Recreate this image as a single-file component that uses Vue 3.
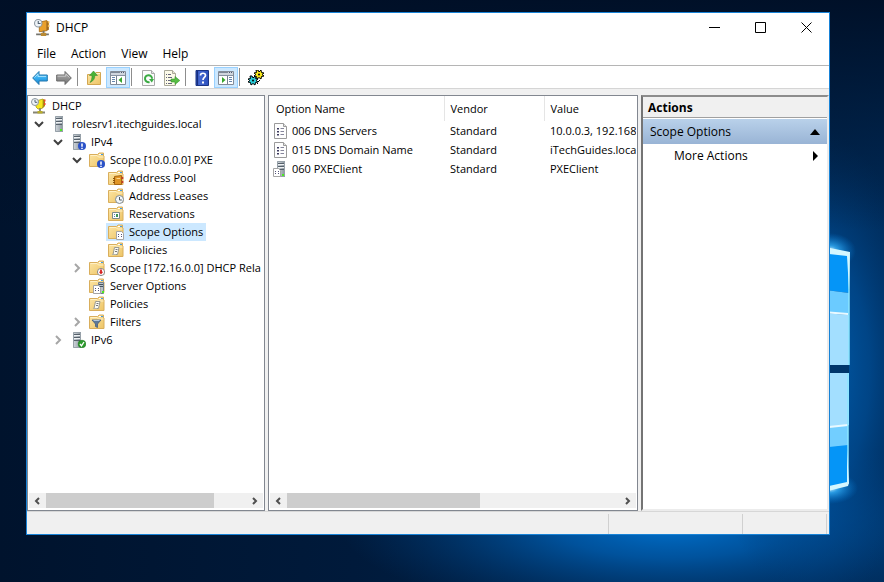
<script setup>
const menus = ['File', 'Action', 'View', 'Help']

const tools = [
  { id: 'back', label: 'Back' },
  { id: 'forward', label: 'Forward' },
  { sep: true },
  { id: 'up', label: 'Up one level' },
  { id: 'tree-pane', label: 'Show/Hide Console Tree', active: true },
  { sep: true },
  { id: 'refresh', label: 'Refresh' },
  { id: 'export', label: 'Export List' },
  { sep: true },
  { id: 'help', label: 'Help' },
  { id: 'action-pane', label: 'Show/Hide Action Pane', active: true },
  { sep: true },
  { id: 'gears', label: 'Configure options' },
]

const tree = [
  { text: 'DHCP', icon: 'dhcp', level: 0 },
  { text: 'rolesrv1.itechguides.local', icon: 'server', level: 1, state: 'open' },
  { text: 'IPv4', icon: 'ipv4', level: 2, state: 'open' },
  { text: 'Scope [10.0.0.0] PXE', icon: 'scope-alert', level: 3, state: 'open' },
  { text: 'Address Pool', icon: 'pool', level: 4 },
  { text: 'Address Leases', icon: 'leases', level: 4 },
  { text: 'Reservations', icon: 'reservations', level: 4 },
  { text: 'Scope Options', icon: 'scope-options', level: 4, selected: true },
  { text: 'Policies', icon: 'policies', level: 4 },
  { text: 'Scope [172.16.0.0] DHCP Rela', icon: 'scope-down', level: 3, state: 'closed' },
  { text: 'Server Options', icon: 'server-options', level: 3 },
  { text: 'Policies', icon: 'policies', level: 3 },
  { text: 'Filters', icon: 'filters', level: 3, state: 'closed' },
  { text: 'IPv6', icon: 'ipv6', level: 2, state: 'closed' },
]

const options = [
  { name: '006 DNS Servers', vendor: 'Standard', value: '10.0.0.3, 192.168', icon: 'option' },
  { name: '015 DNS Domain Name', vendor: 'Standard', value: 'iTechGuides.loca', icon: 'option' },
  { name: '060 PXEClient', vendor: 'Standard', value: 'PXEClient', icon: 'server-option' },
]

const indent = (level) => (level ? 3 + 19 * (level - 1) : 1) + 'px'
</script>

<template>
  <div class="desktop">
    <svg class="wallpaper" viewBox="0 0 884 582" preserveAspectRatio="none" aria-hidden="true">
      <defs>
        <linearGradient id="wp-base" x1="0" y1="0" x2="1" y2="0">
          <stop offset="0" stop-color="#00132d" /><stop offset=".4" stop-color="#001a3b" />
          <stop offset=".75" stop-color="#00264f" /><stop offset="1" stop-color="#002b59" />
        </linearGradient>
        <radialGradient id="wp-glow" cx=".5" cy=".5" r=".5">
          <stop offset="0" stop-color="#0070cc" /><stop offset=".35" stop-color="#005aaa" stop-opacity=".85" />
          <stop offset="1" stop-color="#003b78" stop-opacity="0" />
        </radialGradient>
        <radialGradient id="wp-side" cx=".5" cy=".5" r=".5">
          <stop offset="0" stop-color="#0062b4" /><stop offset=".5" stop-color="#00509a" stop-opacity=".7" />
          <stop offset="1" stop-color="#003b78" stop-opacity="0" />
        </radialGradient>
        <linearGradient id="wp-top" x1="0" y1="0" x2="0" y2="1">
          <stop offset="0" stop-color="#000f26" stop-opacity=".95" /><stop offset="1" stop-color="#000f26" stop-opacity="0" />
        </linearGradient>
        <radialGradient id="wp-flare" cx=".5" cy=".5" r=".5">
          <stop offset="0" stop-color="#e6fbff" /><stop offset=".3" stop-color="#38b6ff" stop-opacity=".75" />
          <stop offset="1" stop-color="#0080e0" stop-opacity="0" />
        </radialGradient>
      </defs>
      <rect width="884" height="582" fill="url(#wp-base)" />
      <ellipse cx="670" cy="525" rx="330" ry="95" fill="url(#wp-glow)" />
      <ellipse cx="815" cy="370" rx="110" ry="240" fill="url(#wp-side)" />
      <rect width="884" height="230" fill="url(#wp-top)" />
      <ellipse cx="830" cy="251" rx="26" ry="18" fill="url(#wp-flare)" />
      <ellipse cx="830" cy="488" rx="28" ry="16" fill="url(#wp-flare)" />
      <path d="M810 247 849 254V293L810 288Z" fill="#0595f7" />
      <path d="M810 288 849 293V315L810 312Z" fill="#6bcbff" />
      <path d="M810 312 849 315V365H810Z" fill="#a3dfff" />
      <path d="M810 311 848 314" stroke="#e9f9ff" stroke-width="2" />
      <path d="M810 373H849V425L810 429Z" fill="#a3dfff" />
      <path d="M810 429 848 425V446L810 449Z" fill="#72ceff" />
      <path d="M810 449 848 445V485L810 490Z" fill="#0595f7" />
      <path d="M810 429 848 425" stroke="#e9f9ff" stroke-width="2" />
      <path d="M810 365H849V373H810Z" fill="#00366b" />
      <path d="M849 254V365" stroke="#8be6ff" stroke-width="1.5" />
      <path d="M848 373V484" stroke="#8be6ff" stroke-width="1.5" />
      <path d="M820 246 850 252 849 290 847 256 820 253Z" fill="#d4f7ff" />
      <path d="M820 488 847 482 847 450 849 483 848 486 820 493Z" fill="#d4f7ff" />
    </svg>

    <svg class="sprite" width="0" height="0" aria-hidden="true">
      <defs>
        <linearGradient id="g-blue" x1="0" y1="0" x2="0" y2="1">
          <stop offset="0" stop-color="#7fd4fb" /><stop offset=".5" stop-color="#36aef0" /><stop offset="1" stop-color="#1580cd" />
        </linearGradient>
        <linearGradient id="g-gray" x1="0" y1="0" x2="0" y2="1">
          <stop offset="0" stop-color="#b5b5b5" /><stop offset="1" stop-color="#707070" />
        </linearGradient>
        <linearGradient id="g-folder" x1="0" y1="0" x2="1" y2="1">
          <stop offset="0" stop-color="#fde6a5" /><stop offset="1" stop-color="#edc466" />
        </linearGradient>
        <linearGradient id="g-help" x1="0" y1="0" x2="1" y2="0">
          <stop offset="0" stop-color="#1f3d9c" /><stop offset=".25" stop-color="#4668d0" /><stop offset="1" stop-color="#2c50bd" />
        </linearGradient>
        <linearGradient id="g-server" x1="0" y1="0" x2="1" y2="0">
          <stop offset="0" stop-color="#d3d9de" /><stop offset=".5" stop-color="#b0b8bf" /><stop offset="1" stop-color="#858f98" />
        </linearGradient>

        <g id="folder-shape">
          <path d="M.5 2.5h8l1.500-1.500h4.500v3h.5v10.500H.5Z" fill="url(#g-folder)" stroke="#d9ae5c" />
          <path d="M10 2.500h4" stroke="#fff" /><path d="M12 2.500h2" stroke="#3f9be6" />
          <path d="M1.500 3.500h6.500l1.500 1.500h5" fill="none" stroke="#fff1c6" />
        </g>
        <g id="tower-shape">
          <path d="M0 0H8V16H0Z" fill="url(#g-server)" /><path d="M.5.5H7.500V15.500H.5Z" fill="none" stroke="#97a1a9" />
          <path d="M1 2.500H7M1 5.500H7M1 8.500H7" stroke="#56616b" />
          <path d="M1 3.500H7M1 6.500H7" stroke="#eef1f3" />
        </g>
        <g id="sheet-shape">
          <path d="M.5.5H5.500L7.500 2.500V8.500H.5Z" fill="#fff" stroke="#a5a5a5" />
          <path d="M2 3.500h1M5 3.500h1M2 5.500h1M5 5.500h1" stroke="#54547a" />
        </g>
        <g id="alert-shape">
          <circle cx="4" cy="4" r="4" fill="#2a52c8" /><path d="M4 1.500V4.800M4 5.800V7" stroke="#fff" stroke-width="1.500" />
        </g>
        <g id="gear-shape">
          <path d="M4 0 5 2 7 0 7.500 2.500 10 3 8 4.500 10 6 7.500 6.500 7 9 5 7.500 3 9 2.500 6.500 0 6 1.800 4.500 0 3 2.500 2.500 2 0Z" stroke="#000" stroke-width="1" />
          <circle cx="5" cy="4.500" r="1" fill="#000" />
        </g>

        <symbol id="i-dhcp-app" viewBox="0 0 16 16">
          <path d="M5 3 12 1.500V11L5 12Z" fill="#e9a02c" stroke="#a96c14" stroke-width=".8" />
          <path d="M12 1.500 14 3V10L12 11Z" fill="#a56a18" />
          <path d="M13 2h1.500v2H13ZM13 5.500h1.500v2H13Z" fill="#f0b850" />
          <path d="M9 11v3M2 14.500h12" stroke="#76756e" stroke-width="1.800" /><path d="M6.500 13h5v3h-5Z" fill="#b98a33" />
          <circle cx="4" cy="4" r="3.500" fill="#eef3f7" stroke="#8b969f" /><path d="M4 1.800V4.300H6.200" fill="none" stroke="#4f6070" />
        </symbol>
        <symbol id="i-dhcp" viewBox="0 0 16 16">
          <path d="M5 3 12 1V9L10 11H7L5 9Z" fill="#f7e71f" stroke="#aa9d15" stroke-width=".8" />
          <path d="M12 1 14 2V8L11 11 12 8Z" fill="#aa8a15" />
          <path d="M13 1.500h1.500v2H13ZM13 5h1.500v2H13Z" fill="#ef4430" />
          <path d="M9 10v4M2 14.500h12" stroke="#858475" stroke-width="1.800" /><path d="M6.500 13h5v2.500h-5Z" fill="#b8ac2d" />
          <circle cx="4" cy="4" r="3.500" fill="#eef3f7" stroke="#8b969f" /><path d="M4 1.800V4.300H6.200" fill="none" stroke="#4f6070" />
        </symbol>
        <symbol id="i-server" viewBox="0 0 16 16">
          <use href="#tower-shape" x="4" y="0" /><path d="M9 13h2v2H9Z" fill="#4bea22" />
        </symbol>
        <symbol id="i-ipv4" viewBox="0 0 16 16">
          <use href="#tower-shape" x="3" y="0" /><use href="#alert-shape" x="8" y="8" />
        </symbol>
        <symbol id="i-ipv6" viewBox="0 0 16 16">
          <use href="#tower-shape" x="3" y="0" /><circle cx="12" cy="12" r="3.800" fill="#2c9b2c" stroke="#187318" stroke-width=".6" />
          <path d="M10 12 11.500 13.800 14 10" fill="none" stroke="#fff" stroke-width="1.300" />
        </symbol>
        <symbol id="i-scope-alert" viewBox="0 0 16 16">
          <use href="#folder-shape" /><use href="#alert-shape" x="8" y="8" />
        </symbol>
        <symbol id="i-scope-down" viewBox="0 0 16 16">
          <use href="#folder-shape" /><circle cx="12" cy="12" r="3.600" fill="#fff" stroke="#8c8c8c" />
          <path d="M12 9.500V13" stroke="#d61f1f" stroke-width="1.800" /><path d="M9.800 11.800h4.400L12 14.600Z" fill="#d61f1f" />
        </symbol>
        <symbol id="i-pool" viewBox="0 0 16 16">
          <use href="#folder-shape" /><path d="M6.500 6.500 13.500 5.500V14.500H6.500Z" fill="#e09526" stroke="#a8660f" />
          <path d="M5 8.500h2M5 10.500h2M5 12.500h2" stroke="#8c5208" /><path d="M14.500 7v2M14.500 11v2" stroke="#c9362a" stroke-width="1.500" />
          <path d="M8.500 8.500h3.500" stroke="#ffd890" />
        </symbol>
        <symbol id="i-leases" viewBox="0 0 16 16">
          <use href="#folder-shape" /><circle cx="11.500" cy="11.500" r="4" fill="#f3f7f9" stroke="#7f8a92" />
          <path d="M11.500 9V12H13.800" fill="none" stroke="#4c5963" />
        </symbol>
        <symbol id="i-reservations" viewBox="0 0 16 16">
          <use href="#folder-shape" /><path d="M4.500 6.500h7v6h-7Z" fill="#fff" stroke="#7d8b8b" />
          <path d="M6 8h1v1H6ZM6 10h1v1H6Z" fill="#5a81b3" /><path d="M8 8h2v3H8Z" fill="#3c9452" />
        </symbol>
        <symbol id="i-scope-options" viewBox="0 0 16 16">
          <use href="#folder-shape" /><use href="#sheet-shape" x="8" y="7" />
        </symbol>
        <symbol id="i-policies" viewBox="0 0 16 16">
          <use href="#folder-shape" /><path d="M6.500 5.500h4.500l-1.500 7H5Z" fill="#fbfbf4" stroke="#9a9a90" />
          <path d="M7.500 7.500h2M7 9.500h2" stroke="#777" /><path d="M4 12h4v1H4Z" fill="#b4b4a8" />
        </symbol>
        <symbol id="i-server-options" viewBox="0 0 16 16">
          <use href="#folder-shape" /><path d="M9.500 4.500h5v11h-5Z" fill="#b9c1c8" stroke="#74808a" />
          <path d="M10 6.500h4M10 8.500h4" stroke="#48545f" /><path d="M13 13h2v2h-2Z" fill="#4bea22" />
          <use href="#sheet-shape" x="4" y="7" />
        </symbol>
        <symbol id="i-filters" viewBox="0 0 16 16">
          <use href="#folder-shape" /><path d="M3 6h9L8.500 10v3.500l-2-1V10Z" fill="#5c7899" stroke="#455d7b" stroke-width=".8" />
          <path d="M4.500 6.500h6" stroke="#b3c8de" />
        </symbol>
        <symbol id="i-option" viewBox="0 0 16 16">
          <path d="M1.500.5H10.500L13.500 3.500V15.500H1.500Z" fill="#fdfdfd" stroke="#9a9a9a" /><path d="M10.500.5V3.500H13.500" fill="#e4e4e4" stroke="#9a9a9a" />
          <path d="M4 5h2v1.500H4ZM4 8h2v1.500H4ZM4 11h2v1.500H4Z" fill="#3d3b5e" /><path d="M7.500 5.500H11M7.500 8.500H11M7.500 11.500H11" stroke="#85859b" />
        </symbol>
        <symbol id="i-server-option" viewBox="0 0 16 16">
          <use href="#tower-shape" x="4" y="0" /><path d="M9 13h2v2H9Z" fill="#4bea22" /><use href="#sheet-shape" x="0" y="7" />
        </symbol>

        <symbol id="i-back" viewBox="0 0 16 16">
          <path d="M.7 8 7 1.500V5H15.300V11H7V14.500Z" fill="url(#g-blue)" stroke="#2377ad" stroke-linejoin="round" />
          <path d="M2.500 7.500 6 4V6.500H14" fill="none" stroke="#b4e8ff" stroke-width=".8" />
        </symbol>
        <symbol id="i-forward" viewBox="0 0 16 16">
          <path d="M15.300 8 9 1.500V5H.7V11H9V14.500Z" fill="url(#g-gray)" stroke="#686868" stroke-linejoin="round" />
          <path d="M1.500 6.200H9.800V4L13.500 7.500" fill="none" stroke="#d4d4d4" stroke-width=".8" />
        </symbol>
        <symbol id="i-up" viewBox="0 0 16 16">
          <path d="M1.500 4.500H8L10 2.500H14.500V14.500H1.500Z" fill="url(#g-folder)" stroke="#d3a650" /><path d="M10 3.500h4" stroke="#fff5d1" />
          <path d="M4 12.500C7.500 11 9 8.500 8.800 5.500H11.500L7.500 1 3.500 5.500H6C6 8.500 5.500 10.500 4 12.500Z" fill="#48b336" stroke="#2d8424" stroke-width=".5" />
        </symbol>
        <g id="pane-shape">
          <path d="M.5 1.500H15.500V14.500H.5Z" fill="#fff" stroke="#848c98" /><path d="M1 2h14v3H1Z" fill="#cfd5dd" />
          <path d="M1 2.500h9" stroke="#7c8796" /><path d="M11 2.500h1M13 2.500h1" stroke="#4b5870" /><path d="M1 5.500H15" stroke="#8792a2" />
        </g>
        <symbol id="i-tree-pane" viewBox="0 0 16 16">
          <use href="#pane-shape" /><path d="M6.500 6V14" stroke="#75808f" />
          <path d="M2 7.500h3M2 9.500h3M2 11.500h3" stroke="#6686ad" /><path d="M12 7V13L8.500 10Z" fill="#35a52c" />
        </symbol>
        <symbol id="i-action-pane" viewBox="0 0 16 16">
          <use href="#pane-shape" /><path d="M9.500 6V14" stroke="#75808f" />
          <path d="M11 7.500h3M11 9.500h3M11 11.500h3" stroke="#6686ad" /><path d="M4 7V13L7.500 10Z" fill="#35a52c" />
        </symbol>
        <symbol id="i-refresh" viewBox="0 0 16 16">
          <path d="M2.500.5H11.500L14.500 3.500V15.500H2.500Z" fill="#fbfbfb" stroke="#a9a9a9" /><path d="M11.500.5V3.500H14.500" fill="#e5e5e5" stroke="#a9a9a9" />
          <path d="M9.500 12A3.500 3.500 0 1 1 12 8.800" fill="none" stroke="#3aaa42" stroke-width="2" /><path d="M9 9H14L11.800 12.500Z" fill="#3aaa42" />
        </symbol>
        <symbol id="i-export" viewBox="0 0 16 16">
          <path d="M.5.5H8.500L11.500 3.500V15.500H.5Z" fill="#fdfbe9" stroke="#aaa999" /><path d="M8.500.5V3.500H11.500" fill="#e9e7d2" stroke="#aaa999" />
          <path d="M2 4.500h1M4 4.500h3M2 7.500h1M4 7.500h4M2 10.500h1M4 10.500h4M2 13.500h1M4 13.500h4" stroke="#65657c" />
          <path d="M7 9H11V6.500L15.800 10.500 11 14.500V12H7Z" fill="#58bd45" stroke="#36942a" stroke-width=".6" />
        </symbol>
        <symbol id="i-help" viewBox="0 0 16 16">
          <path d="M2 .5H14.500V15.500H2Z" fill="url(#g-help)" stroke="#1b3485" /><path d="M3.500 1V15" stroke="#172f80" />
          <path d="M6.500 5.500C6.500 2.500 11.500 2.500 11.500 5.500 11.500 7.500 9 7.500 9 10" fill="none" stroke="#fff" stroke-width="1.700" />
          <path d="M8 11.500h2v2H8Z" fill="#fff" />
        </symbol>
        <symbol id="i-gears" viewBox="0 0 16 16">
          <use href="#gear-shape" x="6" y="0" fill="#f8e81c" /><use href="#gear-shape" x="0" y="6" fill="#28cbd8" />
          <path d="M10 12 12 10M9 14 10 13" stroke="#000" />
        </symbol>
      </defs>
    </svg>

    <main class="window">
      <header class="titlebar">
        <svg class="icon"><use href="#i-dhcp-app" /></svg>
        <h1>DHCP</h1>
        <div class="caption">
          <button type="button" aria-label="Minimize"><svg viewBox="0 0 11 11"><path d="M0 5.500H11" /></svg></button>
          <button type="button" aria-label="Maximize"><svg viewBox="0 0 11 11"><path d="M.5.5H10.500V10.500H.5Z" /></svg></button>
          <button type="button" aria-label="Close"><svg viewBox="0 0 11 11"><path d="M.5.5 10.500 10.500M10.500.5.5 10.500" /></svg></button>
        </div>
      </header>

      <nav class="menubar">
        <button v-for="m in menus" :key="m" type="button">{{ m }}</button>
      </nav>

      <div class="toolbar">
        <template v-for="(t, i) in tools" :key="i">
          <span v-if="t.sep" class="sep"></span>
          <button v-else type="button" :class="{ active: t.active }" :aria-label="t.label">
            <svg class="icon"><use :href="'#i-' + t.id" /></svg>
          </button>
        </template>
      </div>

      <div class="panes">
        <section class="pane">
          <ul class="tree">
            <li v-for="(n, i) in tree" :key="i" :style="{ paddingLeft: indent(n.level) }">
              <button v-if="n.state" type="button" class="twisty" :class="n.state" aria-label="Toggle">
                <svg viewBox="0 0 10 10"><path :d="n.state === 'open' ? 'M1 3 5 7 9 3' : 'M3 1 7 5 3 9'" /></svg>
              </button>
              <span v-else-if="n.level" class="twisty"></span>
              <button type="button" class="node" :class="{ selected: n.selected }">
                <svg class="icon"><use :href="'#i-' + n.icon" /></svg>{{ n.text }}
              </button>
            </li>
          </ul>
          <div class="scrollbar">
            <button type="button" aria-label="Scroll left"><svg viewBox="0 0 7 8"><path d="M5 1 2 4 5 7" /></svg></button>
            <div class="track"><div class="thumb" :style="{ width: '84%' }"></div></div>
            <button type="button" aria-label="Scroll right"><svg viewBox="0 0 7 8"><path d="M2 1 5 4 2 7" /></svg></button>
          </div>
        </section>

        <section class="pane">
          <div class="list">
            <table>
              <colgroup><col class="c-name" /><col class="c-vendor" /><col class="c-value" /></colgroup>
              <thead>
                <tr><th>Option Name</th><th>Vendor</th><th>Value</th></tr>
              </thead>
              <tbody>
                <tr v-for="o in options" :key="o.name">
                  <td><div class="name"><svg class="icon"><use :href="'#i-' + o.icon" /></svg>{{ o.name }}</div></td>
                  <td>{{ o.vendor }}</td>
                  <td>{{ o.value }}</td>
                </tr>
              </tbody>
            </table>
          </div>
          <div class="scrollbar">
            <button type="button" aria-label="Scroll left"><svg viewBox="0 0 7 8"><path d="M5 1 2 4 5 7" /></svg></button>
            <div class="track"><div class="thumb" :style="{ width: '58%' }"></div></div>
            <button type="button" aria-label="Scroll right"><svg viewBox="0 0 7 8"><path d="M2 1 5 4 2 7" /></svg></button>
          </div>
        </section>

        <aside class="actions">
          <h2>Actions</h2>
          <button type="button" class="group">Scope Options<svg viewBox="0 0 10 10"><path d="M0 8 5 2 10 8Z" /></svg></button>
          <button type="button" class="more">More Actions<svg viewBox="0 0 10 10"><path d="M3 0 8 5 3 10Z" /></svg></button>
        </aside>
      </div>

      <footer class="status"><span></span><span></span><span></span><span></span></footer>
    </main>
  </div>
</template>

<style>
body { background: #001a3b; }
</style>

<style scoped>
* { box-sizing: border-box; }
.desktop {
  position: relative;
  display: flex;
  min-height: 100vh;
  padding: 12px 54px 47px 26px;
  font: 12px/18px "Open Sans", "Noto Sans", sans-serif;
  color: #000;
}
.wallpaper { position: absolute; inset: 0; width: 100%; height: 100%; }
.sprite { position: absolute; }
button {
  display: flex;
  align-items: center;
  margin: 0;
  padding: 0;
  border: 0;
  background: none;
  font: inherit;
  color: inherit;
  white-space: nowrap;
}
.icon { flex: none; width: 16px; height: 16px; }

.window {
  position: relative;
  flex: 1;
  min-width: 0;
  display: flex;
  flex-direction: column;
  border: 1px solid #1883d7;
  background: #f0f0f0;
}
.titlebar { display: flex; align-items: center; height: 29px; padding-left: 7px; background: #fff; }
.titlebar .icon { width: 17px; height: 17px; }
h1 { flex: 1; margin: 0 0 0 5px; font-size: 12px; font-weight: 400; }
.caption { display: flex; }
.caption button { justify-content: center; width: 46px; height: 29px; }
.caption svg { width: 11px; height: 11px; }
.caption path { fill: none; stroke: #000; }

.menubar { display: flex; gap: 15px; height: 24px; padding: 0 10px; background: #fff; border-bottom: 1px solid #b5b5b5; }

.toolbar { display: flex; align-items: flex-end; height: 23px; padding-left: 1px; background: #fff; border-bottom: 1px solid #d5d5d5; }
.toolbar button { justify-content: center; width: 24px; height: 21px; padding-top: 1px; border: 1px solid transparent; }
.toolbar .active { background: #cce8ff; border-color: #99d1ff; }
.sep { width: 1px; height: 18px; margin: 0 4px 2px 1px; background: #8d8d8d; }

.panes {
  flex: 1;
  display: grid;
  grid-template-columns: minmax(0, 238fr) minmax(0, 370fr) minmax(0, 188fr);
  gap: 3px;
  padding-top: 6px;
}
.pane { display: flex; flex-direction: column; padding-bottom: 2px; border: 1px solid #828790; background: #fff; font-size: 11px; }
.tree { flex: 1; margin: 0; padding: 1px 0; list-style: none; overflow: hidden; }
.tree li { display: flex; height: 18px; }
.twisty { flex: none; justify-content: center; width: 16px; height: 18px; margin-right: 2px; }
.twisty svg { width: 10px; height: 10px; }
.twisty path { fill: none; stroke: #404040; stroke-width: 2; }
.twisty.closed path { stroke: #a6a6a6; }
.node { gap: 5px; height: 18px; padding: 0 3px 0 2px; }
.selected { background: #cce8ff; }

.scrollbar { display: flex; height: 15px; margin: 0 1px; background: #f0f0f0; }
.scrollbar button { flex: none; justify-content: center; width: 17px; }
.scrollbar svg { width: 7px; height: 8px; }
.scrollbar path { fill: none; stroke: #505050; stroke-width: 2; }
.track { flex: 1; display: flex; }
.thumb { background: #cdcdcd; }

.list { flex: 1; overflow: hidden; margin-right: 1px; }
table { width: 100%; table-layout: fixed; border-collapse: collapse; }
.c-name { width: 175px; }
.c-vendor { width: 100px; }
th, td { padding: 0 0 0 6px; text-align: left; font-weight: 400; white-space: nowrap; overflow: hidden; }
th { height: 25px; border-right: 1px solid #e5e5e5; }
th:first-child { padding-left: 7px; }
th:last-child { border-right: 0; }
td { height: 19px; }
td:first-child { padding-left: 4px; }
.name { display: flex; align-items: center; gap: 3px; }

.actions {
  border: 2px solid;
  border-color: #8c8c8c #ececec #ececec #747474;
  background: #fff;
}
h2 { margin: 0; padding: 2px 5px 0; font-size: 12px; line-height: 18px; font-weight: 700; background: #f0f0f0; border-bottom: 1px solid #a0a0a0; }
.actions button { justify-content: space-between; width: 100%; padding-right: 7px; height: 25px; }
.actions svg { width: 10px; height: 10px; }
.group { margin-top: 1px; padding-left: 7px; background: linear-gradient(#b9d1ea, #99b4d5); }
.actions .more { height: 24px; padding-left: 31px; }

.status { display: grid; grid-template-columns: 580fr 133fr 84fr 2fr; height: 23px; padding-top: 2px; border-top: 1px solid #d7d7d7; }
.status span { border-right: 1px solid #d0d0d0; }
.status span:last-child { border-right: 0; }
</style>
